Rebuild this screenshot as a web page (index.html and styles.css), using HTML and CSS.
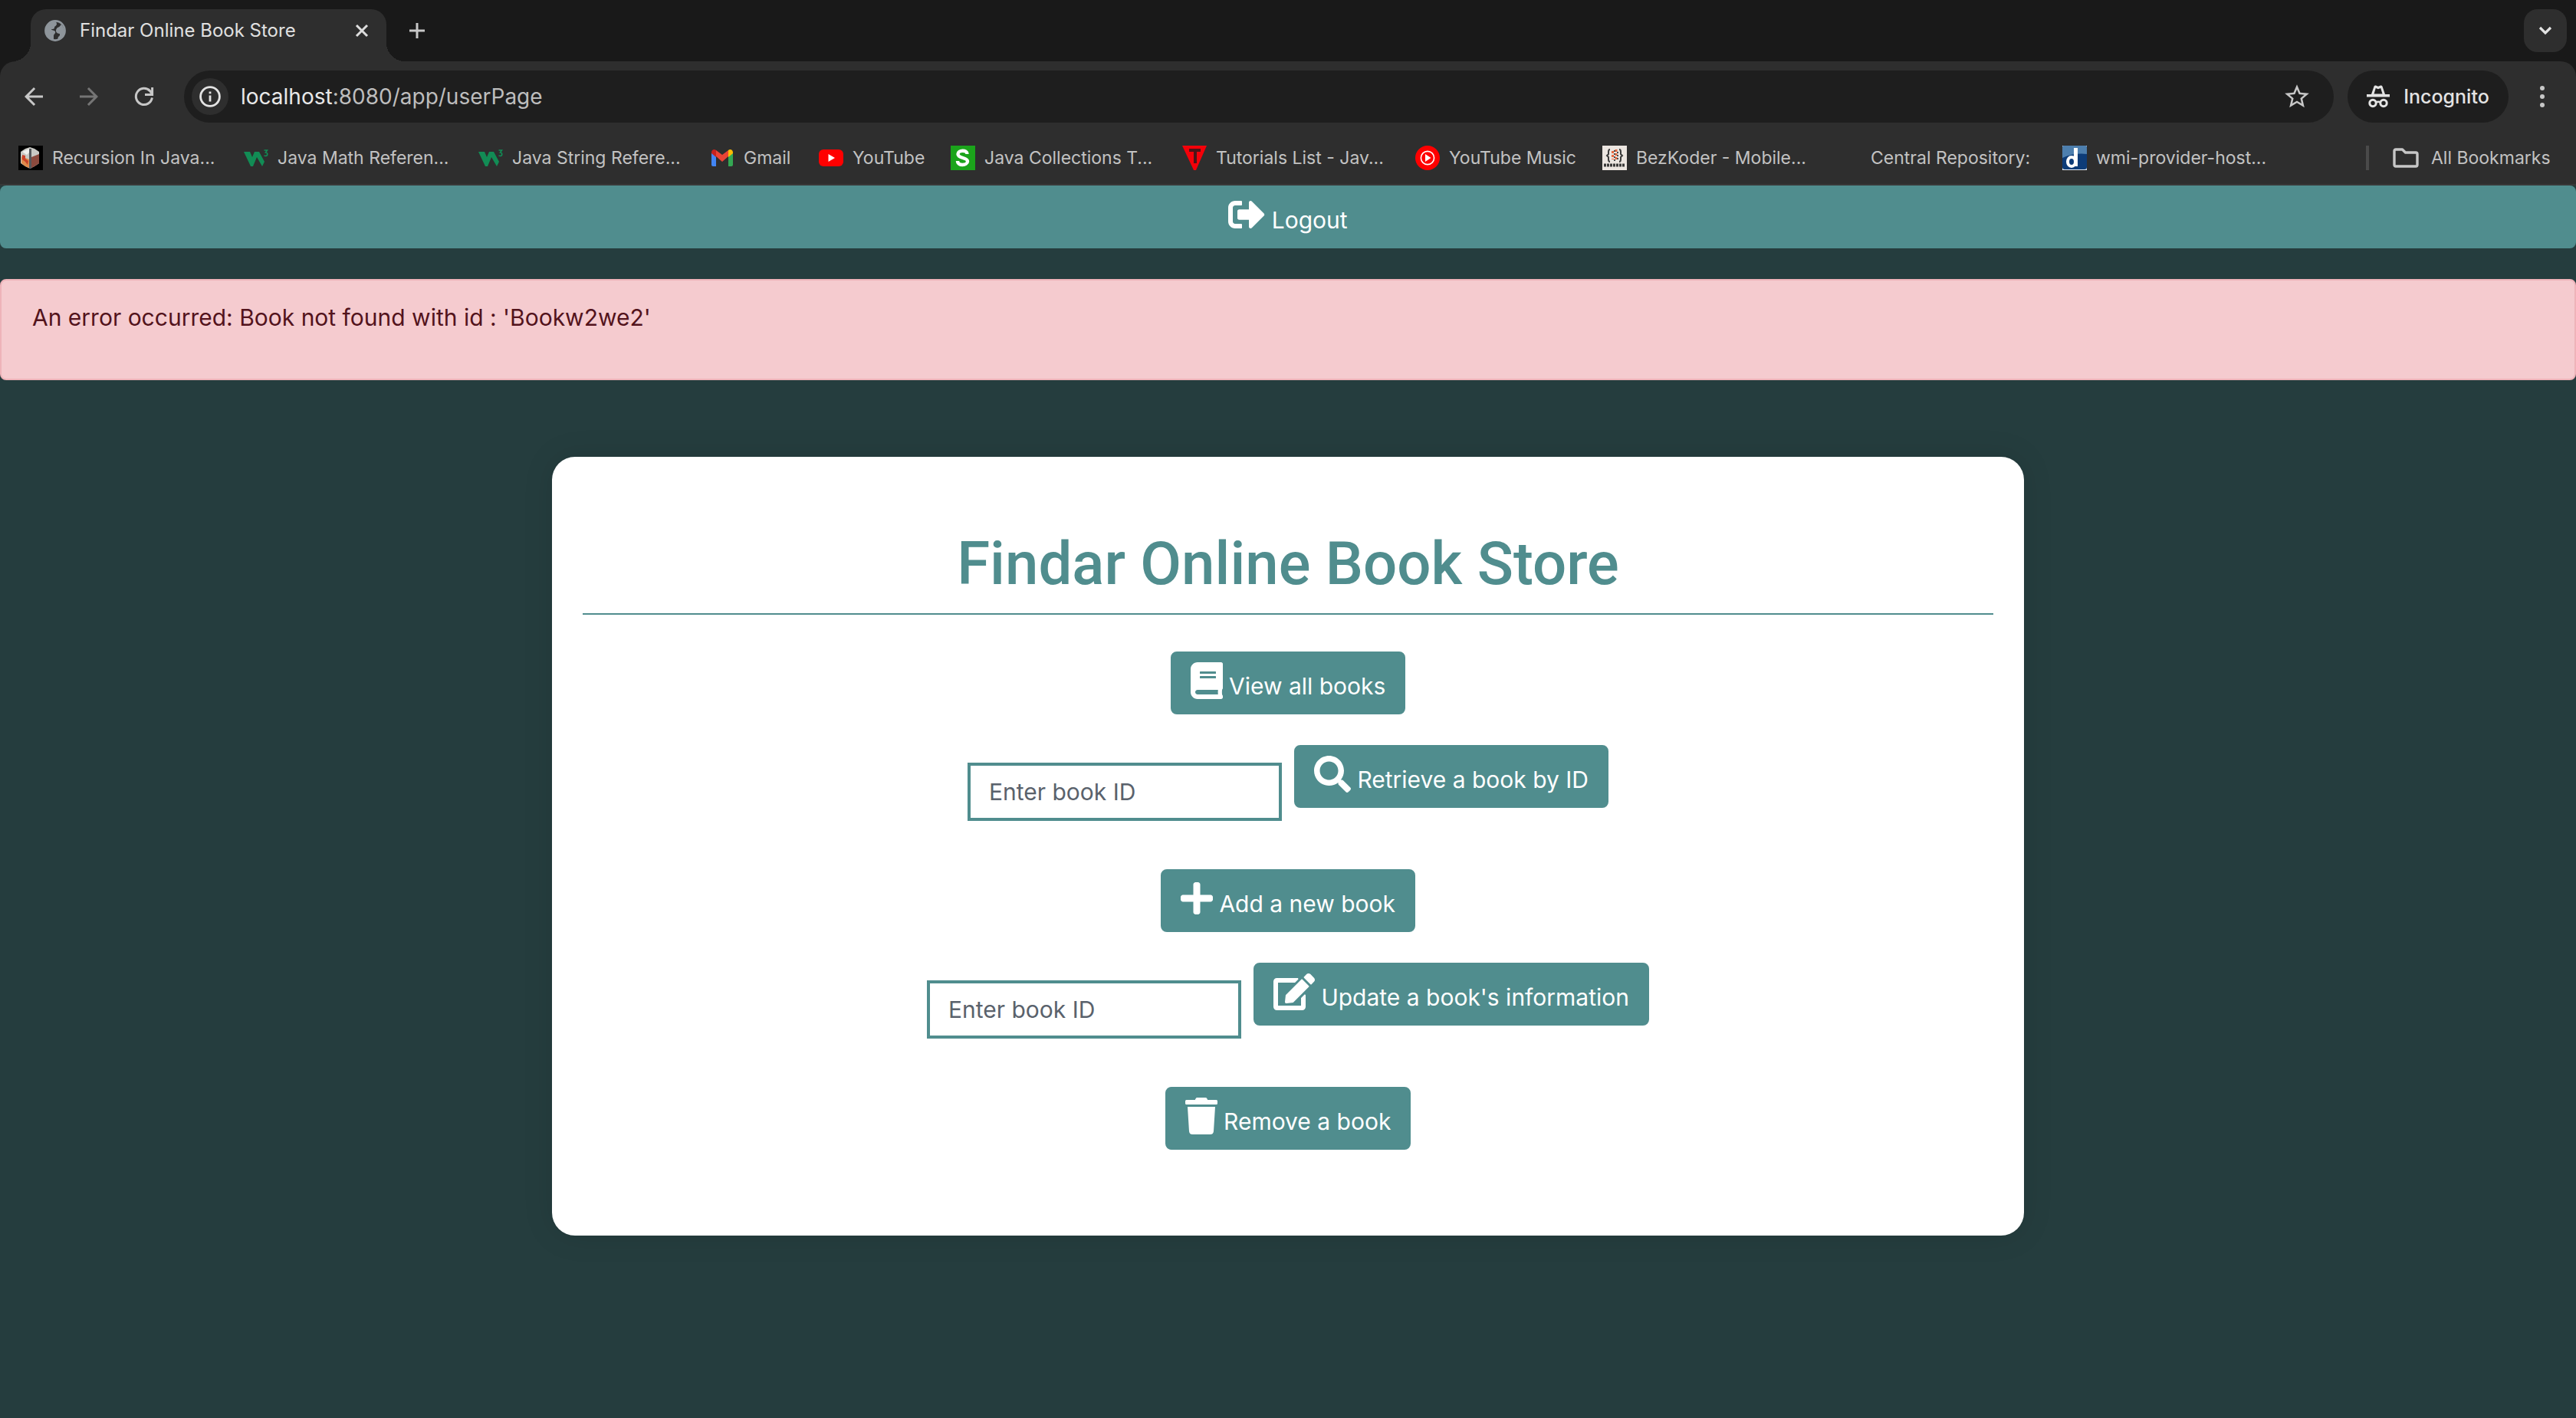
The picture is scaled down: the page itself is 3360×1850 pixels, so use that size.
FILE: index.html
```html
<!DOCTYPE html>
<html lang="en">
<head>
<meta charset="utf-8">
<title>Findar Online Book Store</title>
<link rel="stylesheet" href="styles.css">
</head>
<body>
<header class="browser">
  <div class="tab-strip">
    <div class="tab">
      <svg class="tab-icon" viewBox="0 0 28 28" aria-hidden="true"><circle cx="14" cy="14" r="12.6" fill="none" stroke="#8e959b" stroke-width="2.6"/><path fill="#8e959b" d="M2 12C3 6 8 2 15 2l1 3c0 3-3 3-3 5s-2 2-4 2c0 2 4 1 5 3 1 3-2 3-2 6v5C5 25 1 19 2 12zM17 10c4-1 3-3 5-4 4 4 5 9 3 14-2 3-5 5-8 6l1-4c2-1 2-2 2-4-2 0-5-1-5-4 0-2 1-3 2-4z"/></svg>
      <span class="tab-title">Findar Online Book Store</span>
      <button class="icon-button" type="button" aria-label="Close tab"><svg width="18" height="18" viewBox="0 0 18 18"><path d="M2 2l14 14M16 2L2 16" stroke="#dedede" stroke-width="3"/></svg></button>
    </div>
    <button class="icon-button new-tab" type="button" aria-label="New tab"><svg width="20" height="20" viewBox="0 0 20 20"><path d="M10 0v20M0 10h20" stroke="#c7c7c7" stroke-width="3"/></svg></button>
    <button class="icon-button tab-search" type="button" aria-label="Search tabs"><svg width="18" height="12" viewBox="0 0 18 12"><path d="M2 2l7 7 7-7" fill="none" stroke="#e3e3e3" stroke-width="3.2"/></svg></button>
  </div>
  <div class="toolbar">
    <nav class="history" aria-label="History">
      <button class="icon-button" type="button" aria-label="Back"><svg width="36" height="36" viewBox="0 0 24 24"><path fill="#c7c7c7" d="M20 11H7.83l5.59-5.59L12 4l-8 8 8 8 1.41-1.41L7.83 13H20z"/></svg></button>
      <button class="icon-button" type="button" aria-label="Forward" disabled><svg width="36" height="36" viewBox="0 0 24 24"><path fill="#757575" d="M4 11h12.17l-5.59-5.59L12 4l8 8-8 8-1.41-1.41L16.17 13H4z"/></svg></button>
      <button class="icon-button" type="button" aria-label="Reload"><svg width="36" height="36" viewBox="0 0 36 36"><path fill="none" stroke="#c7c7c7" stroke-width="3" d="M28.4 19.6A10.6 10.6 0 1 1 25.6 10.6L28.5 14.5M28.6 6v9.5H19"/></svg></button>
    </nav>
    <div class="address">
      <button class="site-info" type="button" aria-label="Site information"><svg width="28" height="28" viewBox="0 0 28 28"><circle cx="14" cy="14" r="12.4" fill="none" stroke="#e3e3e3" stroke-width="2.8"/><path stroke="#e3e3e3" stroke-width="2.8" d="M14 12.5v8M14 7.5v2.8"/></svg></button>
      <div class="url"><span class="host">localhost</span>:8080/app/userPage</div>
      <button class="icon-button star" type="button" aria-label="Bookmark this page"><svg width="38" height="38" viewBox="0 0 24 24"><path fill="#c7c7c7" d="M22 9.24l-7.19-.62L12 2 9.19 8.63 2 9.24l5.46 4.73L5.82 21 12 17.27 18.18 21l-1.63-7.03L22 9.24zM12 15.4l-3.76 2.27 1-4.28-3.32-2.88 4.38-.38L12 6.1l1.71 4.04 4.38.38-3.32 2.88 1 4.28L12 15.4z"/></svg></button>
    </div>
    <button class="incognito" type="button">
      <svg width="30" height="30" viewBox="0 0 30 30"><path fill="#e3e3e3" fill-rule="evenodd" d="M6 12L9.6 1.6c.4-1.1 1.4-1.4 2.4-1L15 1.7l3-1.1c1-.4 2-.1 2.4 1L24 12h6v3.500H0V12zm3.500-.5h11L18.200 4 15 5.200 11.800 4z"/><circle cx="8" cy="23.5" r="4.2" fill="none" stroke="#e3e3e3" stroke-width="3"/><circle cx="22" cy="23.5" r="4.2" fill="none" stroke="#e3e3e3" stroke-width="3"/><path d="M12 22.5q3-1.5 6 0" fill="none" stroke="#e3e3e3" stroke-width="2.6"/></svg>
      Incognito
    </button>
    <button class="icon-button menu" type="button" aria-label="Menu"><svg width="6" height="28" viewBox="0 0 6 28"><g fill="#c7c7c7"><circle cx="3" cy="3" r="3"/><circle cx="3" cy="14" r="3"/><circle cx="3" cy="25" r="3"/></g></svg></button>
  </div>
  <nav class="bookmarks" aria-label="Bookmarks">
    <div class="bookmark-list">
      <a class="bookmark" href="#"><svg class="favicon" viewBox="0 0 32 32"><path d="M0 0h32v32H0z"/><path fill="#c9c9c4" d="M15 2l6 2 6 4v15l-6 4-6 3-6-3-6-4V8l6-4z"/><path fill="#e08a4a" d="M4 14l10 4v11l-5-2-5-4z"/><path fill="#c9412a" d="M5 12l4 1v4l4 3-1 5-3-4-4-3z"/><path fill="#8b4a3e" d="M17 15l10-4v12l-6 4-4 2z"/><path fill="#f0f0ee" d="M5 8l9-4 2 3-5 5z"/><path fill="#55585c" d="M14 4h3v26h-3z"/></svg>Recursion In Java...</a>
      <a class="bookmark" href="#"><svg class="favicon" viewBox="0 0 32 32"><path fill="#128c55" d="M0 8h8l3 7 3-7h6l7 13-3 6-7-12-5 12H9z"/><path fill="none" stroke="#128c55" stroke-width="1.6" d="M26.500 6h4l-2 3c3 0 3 4.500 0 4.500l-2-.5"/></svg>Java Math Referen...</a>
      <a class="bookmark" href="#"><svg class="favicon" viewBox="0 0 32 32"><path fill="#128c55" d="M0 8h8l3 7 3-7h6l7 13-3 6-7-12-5 12H9z"/><path fill="none" stroke="#128c55" stroke-width="1.6" d="M26.500 6h4l-2 3c3 0 3 4.500 0 4.500l-2-.5"/></svg>Java String Refere...</a>
      <a class="bookmark" href="#"><svg class="favicon" viewBox="0 0 32 32"><path fill="#4285f4" d="M2 9l6 5v13H4q-2 0-2-2z"/><path fill="#34a853" d="M24 14l6-5v16q0 2-2 2h-4z"/><path fill="#c5221f" d="M2 9c0-4 4-5 6-3v9l-6-5z"/><path fill="#fbbc04" d="M30 9c0-4-4-5-6-3v9l6-5z"/><path fill="#ea4335" d="M8 6l8 6 8-6v8l-8 7-8-7z"/></svg>Gmail</a>
      <a class="bookmark" href="#"><svg class="favicon" viewBox="0 0 32 32"><rect y="5" width="32" height="22" rx="6" fill="#f00"/><path fill="#fff" d="M12.500 11v10l8.500-5z"/></svg>YouTube</a>
      <a class="bookmark" href="#"><svg class="favicon" viewBox="0 0 32 32"><path fill="#1ba41b" d="M0 0h32v32H0z"/><path fill="none" stroke="#fff" stroke-width="4.4" d="M21.500 11c0-6-12-5.500-12 0 0 6 12.500 4 12.500 9.500S9 27 9 20"/></svg>Java Collections T...</a>
      <a class="bookmark" href="#"><svg class="favicon" viewBox="0 0 32 32"><path fill="#f40009" d="M0 0h32L18 32h-3z"/><path fill="#4a1518" d="M9 4h15v4h-5v15h-4V8H9z"/></svg>Tutorials List - Jav...</a>
      <a class="bookmark" href="#"><svg class="favicon" viewBox="0 0 32 32"><circle cx="16" cy="16" r="16" fill="#f00"/><circle cx="16" cy="16" r="8.6" fill="none" stroke="#fff" stroke-width="1.6"/><path fill="#fff" d="M13 11v10l7.500-5z"/></svg>YouTube Music</a>
      <a class="bookmark" href="#"><svg class="favicon" viewBox="0 0 32 32"><path fill="#ece6e1" d="M0 0h32v32H0z"/><path fill="none" stroke="#3c3c3c" stroke-width="2" d="M10 5q-2 0-2 3v3l-2 2 2 2v3q0 3 2 3M22 5q2 0 2 3v3l2 2-2 2v3q0 3-2 3"/><path stroke="#e8683f" stroke-width="3" stroke-dasharray="3 2" d="M13.500 7v11M18 5v14"/><path stroke="#4a4a4a" stroke-width="2" stroke-dasharray="2 2" d="M16 6v14M20 8v10"/><path stroke="#3a3a3a" stroke-width="4" stroke-dasharray="3 1" d="M2 25.500h28"/></svg>BezKoder - Mobile...</a>
      <a class="bookmark" href="#"><span class="favicon"></span>Central Repository:</a>
      <a class="bookmark" href="#"><svg class="favicon" viewBox="0 0 32 32"><path fill="#dfe6ee" d="M0 0h32v32H0z"/><rect width="32" height="31" rx="3" fill="#0d3c78"/><path fill="#4d7fae" d="M2 0h28q2 0 2 3v8Q16 9 0 16V3q0-3 2-3z"/><path fill="none" stroke="#fff" stroke-width="5" d="M17.500 3v24"/><ellipse cx="12" cy="21" rx="5" ry="6" fill="none" stroke="#fff" stroke-width="4"/></svg>wmi-provider-host...</a>
    </div>
    <a class="bookmark all-bookmarks" href="#"><svg width="34" height="26" viewBox="0 0 34 26"><path fill="none" stroke="#c7c7c7" stroke-width="3.4" stroke-linejoin="round" d="M4 2h8.500l4 4H30q2 0 2 2v14q0 2-2 2H4q-2 0-2-2V4q0-2 2-2z"/></svg>All Bookmarks</a>
  </nav>
</header>
<main class="page">
  <button class="btn logout" type="button"><svg class="fa" width="48" height="48" viewBox="0 0 512 512"><path d="M497 273L329 441c-15 15-41 4.500-41-17v-96H152c-13.300 0-24-10.700-24-24v-96c0-13.300 10.700-24 24-24h136V88c0-21.400 25.900-32 41-17l168 168c9.300 9.400 9.300 24.600 0 34zM192 436v-40c0-6.600-5.400-12-12-12H96c-17.700 0-32-14.300-32-32V160c0-17.700 14.300-32 32-32h84c6.600 0 12-5.400 12-12V76c0-6.600-5.400-12-12-12H96c-53 0-96 43-96 96v192c0 53 43 96 96 96h84c6.600 0 12-5.400 12-12z"/></svg> Logout</button>
  <div class="alert" role="alert"><p>An error occurred: Book not found with id : 'Bookw2we2'</p></div>
  <section class="card">
    <h1 class="card-title">Findar Online Book Store</h1>
    <div class="actions">
      <button class="btn" type="button"><svg class="fa" width="42" height="48" viewBox="0 0 448 512"><path d="M448 360V24c0-13.300-10.700-24-24-24H96C43 0 0 43 0 96v320c0 53 43 96 96 96h328c13.300 0 24-10.700 24-24v-16c0-7.500-3.500-14.300-8.900-18.700-4.200-15.400-4.200-59.300 0-74.700 5.400-4.300 8.900-11.100 8.900-18.600zM128 134c0-3.300 2.700-6 6-6h212c3.300 0 6 2.700 6 6v20c0 3.300-2.700 6-6 6H134c-3.300 0-6-2.700-6-6v-20zm0 64c0-3.300 2.700-6 6-6h212c3.300 0 6 2.700 6 6v20c0 3.300-2.700 6-6 6H134c-3.300 0-6-2.700-6-6v-20zm253.400 250H96c-17.700 0-32-14.300-32-32 0-17.600 14.400-32 32-32h285.400c-1.900 17.100-1.900 46.900 0 64z"/></svg> View all books</button>
      <form class="lookup">
        <input class="book-id" type="text" placeholder="Enter book ID" aria-label="ID of the book to retrieve">
        <button class="btn" type="button"><svg class="fa" width="48" height="48" viewBox="0 0 512 512"><path d="M505 442.700L405.300 343c-4.500-4.500-10.600-7-17-7H372c27.600-35.300 44-79.700 44-128C416 93.100 322.900 0 208 0S0 93.100 0 208s93.100 208 208 208c48.300 0 92.700-16.400 128-44v16.300c0 6.400 2.500 12.500 7 17l99.700 99.700c9.400 9.400 24.600 9.400 33.900 0l28.300-28.300c9.400-9.400 9.400-24.600.1-34zM208 336c-70.700 0-128-57.200-128-128 0-70.700 57.200-128 128-128 70.700 0 128 57.200 128 128 0 70.700-57.200 128-128 128z"/></svg> Retrieve a book by ID</button>
      </form>
      <button class="btn" type="button"><svg class="fa" width="42" height="48" viewBox="0 0 448 512"><path d="M416 208H272V64c0-17.670-14.330-32-32-32h-32c-17.670 0-32 14.330-32 32v144H32c-17.670 0-32 14.330-32 32v32c0 17.670 14.330 32 32 32h144v144c0 17.670 14.330 32 32 32h32c17.670 0 32-14.330 32-32V304h144c17.670 0 32-14.330 32-32v-32c0-17.670-14.330-32-32-32z"/></svg> Add a new book</button>
      <form class="lookup">
        <input class="book-id" type="text" placeholder="Enter book ID" aria-label="ID of the book to update">
        <button class="btn" type="button"><svg class="fa" width="54" height="48" viewBox="0 0 576 512"><path d="M402.600 83.200l90.200 90.200c3.800 3.800 3.800 10 0 13.800L274.400 405.600l-92.800 10.300c-12.400 1.400-22.900-9.100-21.500-21.500l10.300-92.800L388.800 83.200c3.800-3.800 10-3.800 13.800 0zm162-22.900l-48.800-48.800c-15.200-15.200-39.900-15.200-55.200 0l-35.400 35.400c-3.800 3.800-3.800 10 0 13.800l90.200 90.200c3.800 3.800 10 3.800 13.800 0l35.400-35.400c15.200-15.300 15.200-40 0-55.200zM384 346.200V448H64V128h229.800c3.200 0 6.200-1.300 8.500-3.500l40-40c7.600-7.600 2.200-20.500-8.500-20.500H48C21.500 64 0 85.500 0 112v352c0 26.500 21.500 48 48 48h352c26.500 0 48-21.500 48-48V306.200c0-10.700-12.900-16-20.500-8.500l-40 40c-2.200 2.300-3.500 5.300-3.500 8.500z"/></svg> Update a book's information</button>
      </form>
      <button class="btn" type="button"><svg class="fa" width="42" height="48" viewBox="0 0 448 512"><path d="M432 32H312l-9.400-18.700A24 24 0 0 0 281.100 0H166.800a23.720 23.720 0 0 0-21.400 13.300L136 32H16A16 16 0 0 0 0 48v32a16 16 0 0 0 16 16h416a16 16 0 0 0 16-16V48a16 16 0 0 0-16-16zM53.200 467a48 48 0 0 0 47.900 45h245.800a48 48 0 0 0 47.900-45L416 128H32z"/></svg> Remove a book</button>
    </div>
  </section>
</main>
</body>
</html>
```
FILE: styles.css
```css
:root {
  --teal: #508d8e;
  --dark: #253d3e;
  --chrome: #2e2e2e;
  --strip: #191919;
  --field: #1e1e1e;
}

* {
  box-sizing: border-box;
}

body {
  margin: 0;
  min-height: 100vh;
  background: var(--dark);
  font: 30px/48px Inter, "Liberation Sans", sans-serif;
}

button,
input {
  font: inherit;
}

/* Browser window */

.browser {
  background: var(--strip);
}

.icon-button {
  display: flex;
  align-items: center;
  justify-content: center;
  padding: 0;
  border: 0;
  background: none;
}

.tab-strip {
  display: flex;
  align-items: center;
  height: 80px;
  padding: 12px 12px 0 40px;
}

.tab {
  position: relative;
  display: flex;
  align-items: center;
  width: 464px;
  height: 68px;
  padding: 0 23px 12px 18px;
  border-radius: 20px 20px 0 0;
  background: var(--chrome);
}

.tab::before,
.tab::after {
  content: "";
  position: absolute;
  bottom: 0;
  width: 24px;
  height: 24px;
}

.tab::before {
  right: 100%;
  background: radial-gradient(circle at 0 0, transparent 24px, var(--chrome) 24px);
}

.tab::after {
  left: 100%;
  background: radial-gradient(circle at 100% 0, transparent 24px, var(--chrome) 24px);
}

.tab-icon {
  width: 28px;
  height: 28px;
}

.tab-title {
  flex: 1;
  margin-left: 18px;
  color: #e0e0e0;
  font-size: 24px;
  line-height: 32px;
}

.new-tab {
  margin: 0 0 12px 30px;
}

.tab-search {
  width: 56px;
  height: 56px;
  margin: 0 0 12px auto;
  border-radius: 18px;
  background: var(--chrome);
}

.toolbar {
  display: flex;
  align-items: center;
  height: 92px;
  padding: 0 41px 0 26px;
  border-radius: 20px 20px 0 0;
  background: var(--chrome);
}

.history {
  display: flex;
  gap: 36px;
  margin-right: 34px;
}

.address {
  display: flex;
  flex: 1;
  align-items: center;
  height: 68px;
  padding: 0 29px 0 10px;
  border-radius: 34px;
  background: var(--field);
}

.site-info {
  display: flex;
  align-items: center;
  justify-content: center;
  width: 48px;
  height: 48px;
  padding: 0;
  border: 0;
  border-radius: 24px;
  background: var(--chrome);
}

.url {
  flex: 1;
  margin-left: 16px;
  color: #bdbdbd;
  font-size: 28px;
}

.host {
  color: #e8e8e8;
}

.incognito {
  display: flex;
  gap: 18px;
  align-items: center;
  justify-content: center;
  width: 210px;
  height: 68px;
  margin: 0 41px 0 18px;
  padding: 0;
  border: 0;
  border-radius: 34px;
  background: var(--field);
  color: #e3e3e3;
  font-size: 25px;
  font-weight: 500;
}

.bookmarks {
  display: flex;
  justify-content: space-between;
  height: 70px;
  padding: 18px 28px 18px 24px;
  border-bottom: 2px solid #383838;
  background: var(--chrome);
}

.bookmark-list {
  display: grid;
  grid-template-columns: 294px 306px 302px 142px 172px 302px 304px 244px 306px 294px 280px;
}

.bookmark {
  display: flex;
  gap: 12px;
  align-items: center;
  height: 32px;
  color: #c2c2c2;
  font-size: 23px;
  text-decoration: none;
  white-space: nowrap;
}

.favicon {
  width: 32px;
  height: 32px;
}

.all-bookmarks {
  gap: 16px;
  width: 246px;
  padding-left: 31px;
  border-left: 4px solid #4a4a4a;
}

/* Book store page */

.page {
  display: flex;
  flex-direction: column;
}

.btn {
  padding: 12px 24px;
  border: 2px solid var(--teal);
  border-radius: 8px;
  background: var(--teal);
  color: #fff;
  line-height: 46px;
  white-space: nowrap;
}

.fa {
  fill: currentColor;
  vertical-align: -6px;
}

.alert {
  margin: 40px 0 100px;
  padding: 24px 40px;
  border: 2px solid #eeb3b9;
  border-radius: 8px;
  background: #f5cbcf;
  color: #53131c;
}

.alert p {
  margin: 0 0 32px;
}

.card {
  width: 100%;
  max-width: 1920px;
  margin: 0 auto;
  padding: 92px 40px 112px;
  border-radius: 30px;
  background: #fff;
  box-shadow: 0 0 40px rgba(0, 0, 0, 0.1);
}

.card-title {
  margin: 0 0 48px;
  padding-bottom: 16px;
  border-bottom: 2px solid var(--teal);
  color: var(--teal);
  font: 500 78px/96px Roboto, "Liberation Sans", sans-serif;
  text-align: center;
}

.actions {
  display: flex;
  flex-direction: column;
  gap: 40px;
  align-items: center;
}

.lookup {
  display: flex;
  gap: 16px;
  align-items: flex-start;
}

.book-id {
  width: 410px;
  height: 76px;
  margin: 23px 0;
  padding: 0 24px;
  border: 4px solid var(--teal);
  background: #fff;
}

.book-id::placeholder {
  color: #5a626c;
  opacity: 1;
}
```
